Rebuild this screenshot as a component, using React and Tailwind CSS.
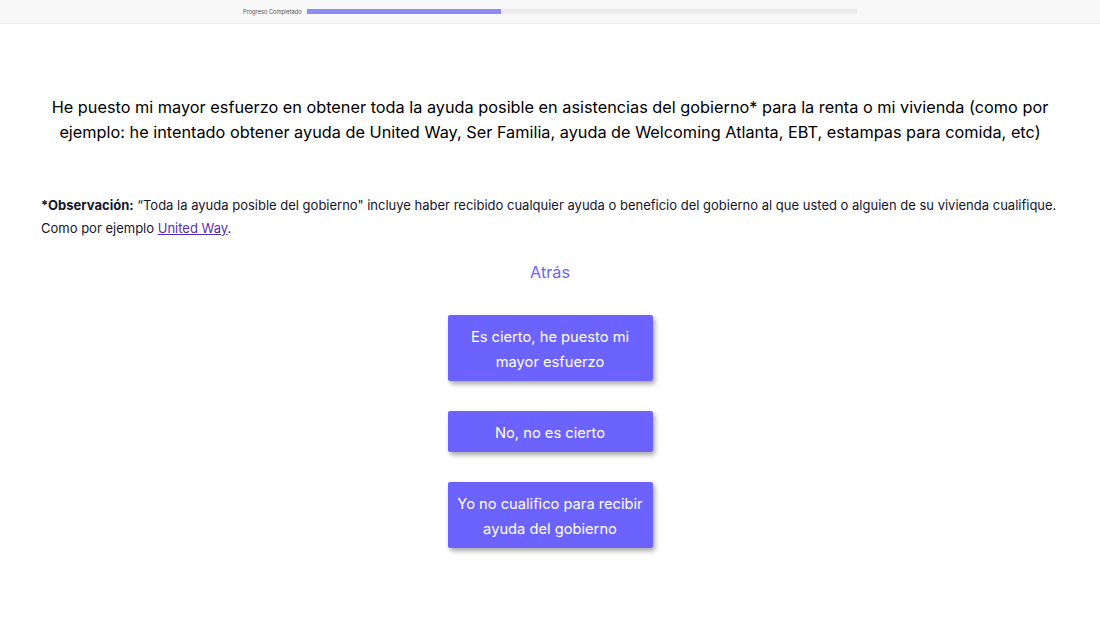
import React from 'react';

function ChoiceButton({ children }) {
    return (
        <button className="w-[205px] bg-[#6c63ff] text-white text-[14.7px] leading-[25px] px-[6px] pt-[10px] pb-[6px] rounded-[2px]
                           shadow-[2px_3px_5px_rgba(0,0,0,0.35)]">
            {children}
        </button>
    );
}

export default function App() {
    return (
        <div className="min-h-[628px] bg-white font-['Inter','Noto_Sans',sans-serif]">
            <div className="h-[24px] bg-[#f8f8f8] border-b border-[#ececec] flex items-center">
                <div className="ml-[243px] flex items-center gap-[6px]">
                    <span className="w-[58px] whitespace-nowrap text-[5.7px] text-[#555] leading-none">Progreso Completado</span>
                    <div className="w-[550px] h-[5px] bg-[#ebebeb] flex">
                        <div className="w-[194px] h-full bg-[#8f8bf5]" />
                    </div>
                </div>
            </div>

            <div className="px-[41px]">
                <h1 className="mt-[71px] text-center text-[16.3px] leading-[25px] text-black">
                    He puesto mi mayor esfuerzo en obtener toda la ayuda posible en asistencias del gobierno* para la renta o mi vivienda (como por ejemplo: he intentado obtener ayuda de United Way, Ser Familia, ayuda de Welcoming Atlanta, EBT, estampas para comida, etc)
                </h1>

                <p className="mt-[49px] text-[13px] leading-[23px] text-[#16152a]">
                    <strong className="font-bold">*Observación:</strong> “Toda la ayuda posible del gobierno" incluye haber recibido cualquier ayuda o beneficio del gobierno al que usted o alguien de su vivienda cualifique. Como por ejemplo{' '}
                    <a href="#" className="text-[#5b2bb5] underline">United Way</a>.
                </p>

                <div className="mt-[20px] flex flex-col items-center">
                    <button className="text-[16.2px] leading-[24px] text-[#6c63ff]">Atrás</button>
                    <div className="mt-[31px] flex flex-col items-center gap-[30px]">
                        <ChoiceButton>Es cierto, he puesto mi mayor esfuerzo</ChoiceButton>
                        <ChoiceButton>No, no es cierto</ChoiceButton>
                        <ChoiceButton>Yo no cualifico para recibir ayuda del gobierno</ChoiceButton>
                    </div>
                </div>
            </div>
        </div>
    );
}
